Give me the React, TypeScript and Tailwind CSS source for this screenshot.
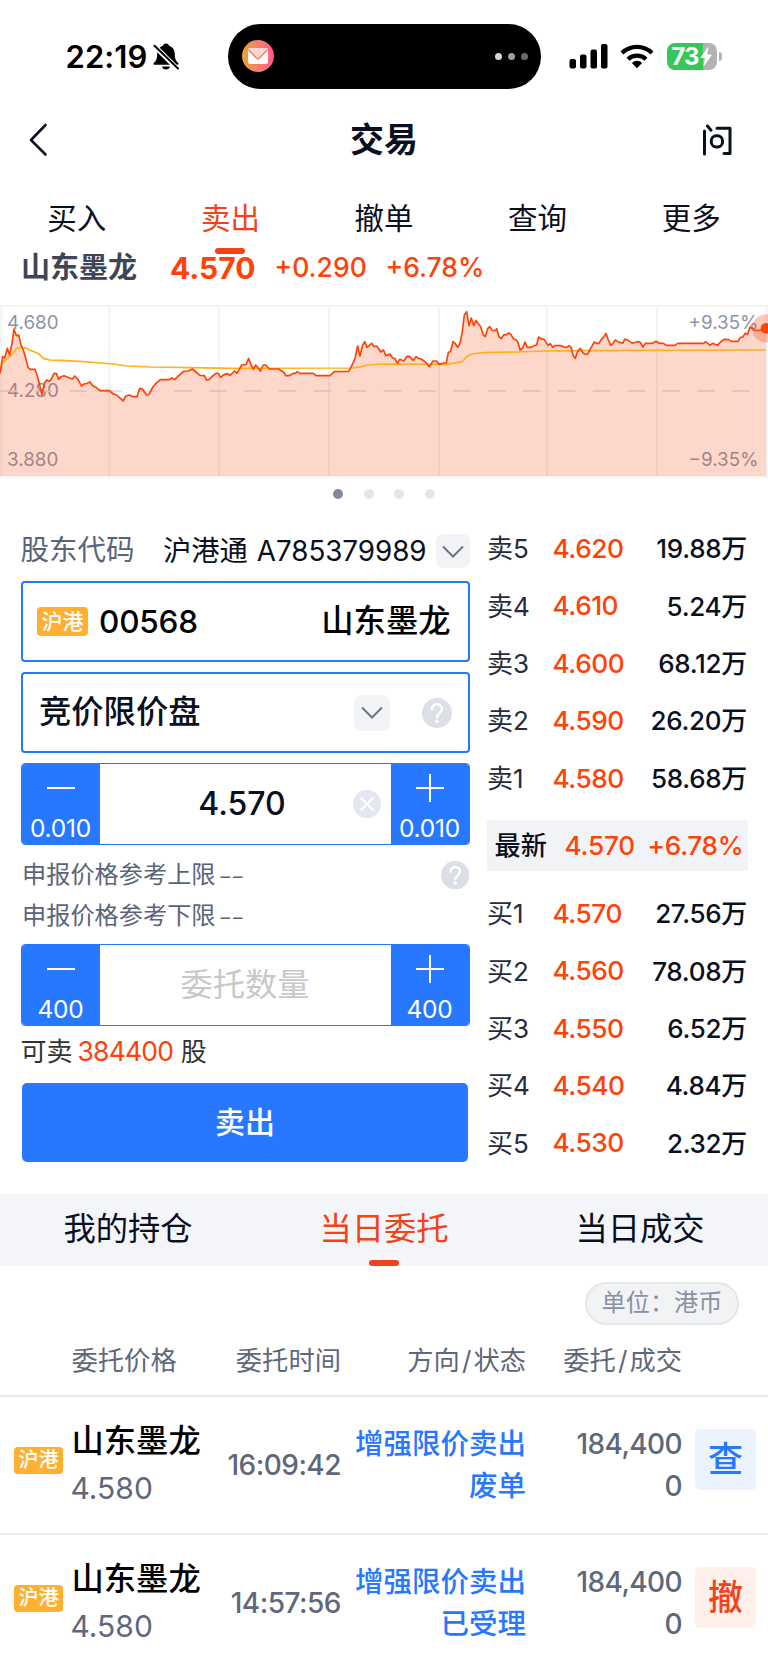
import { useState } from 'react';
import type { ReactNode } from 'react';
import clsx from 'clsx';

type Level = { label: string; price: string; volume: string };
type Order = { price: string; time: string; status: string; amount: string; filled: string; action: string };

const TOP_TABS = ['买入', '卖出', '撤单', '查询', '更多'];
const BOTTOM_TABS = ['我的持仓', '当日委托', '当日成交'];

const ASKS: Level[] = [
    { label: '卖5', price: '4.620', volume: '19.88万' },
    { label: '卖4', price: '4.610', volume: '5.24万' },
    { label: '卖3', price: '4.600', volume: '68.12万' },
    { label: '卖2', price: '4.590', volume: '26.20万' },
    { label: '卖1', price: '4.580', volume: '58.68万' },
];

const BIDS: Level[] = [
    { label: '买1', price: '4.570', volume: '27.56万' },
    { label: '买2', price: '4.560', volume: '78.08万' },
    { label: '买3', price: '4.550', volume: '6.52万' },
    { label: '买4', price: '4.540', volume: '4.84万' },
    { label: '买5', price: '4.530', volume: '2.32万' },
];

const ORDERS: Order[] = [
    { price: '4.580', time: '16:09:42', status: '废单', amount: '184,400', filled: '0', action: '查' },
    { price: '4.580', time: '14:57:56', status: '已受理', amount: '184,400', filled: '0', action: '撤' },
];

// Intraday price line, one list per half of the session
const MORNING = '0,580 8,530 14,534 22,505 29,525 36,490 42,447 49,467 56,465 63,495 70,510 77,535 84,562 91,568 105,568 112,588 119,615 126,644 133,610 140,600 147,604 154,598 162,580 169,580 176,598 183,590 192,587 203,592 217,597 224,588 234,598 244,618 252,612 262,610 270,606 278,617 288,622 300,632 328,632 340,642 350,645 362,656 369,663 378,648 388,645 398,650 411,650 419,625 427,627 440,645 447,643 458,622 468,610 481,599 508,599 516,594 524,599 535,588 551,574 565,573 577,567 588,576 600,586 613,587 620,600 627,599 640,586 648,580 655,580 662,592 672,584 683,581 690,586 704,573 711,580 718,568 725,555 738,554 746,535 753,555 760,568 767,555 774,564 781,573 790,555 797,555 808,567 836,567 845,573 852,577 857,587 868,587 880,580 886,580 892,575 900,580 940,580 948,587 990,587 1003,575 1046,574 1055,558 1065,535 1073,498 1080,528 1088,495 1094,485 1101,502 1115,490 1122,500 1130,498 1142,516 1150,510';
const AFTERNOON = '0,513 5,527 18,522 26,534 33,536 40,550 47,538 60,543 69,529 76,529 88,541 96,530 103,535 112,537 126,548 136,560 147,543 158,543 165,553 180,549 187,549 193,517 199,515 207,485 213,490 221,502 228,490 235,455 241,405 248,395 255,437 262,414 269,437 276,421 283,432 290,440 297,463 304,470 311,446 317,440 324,451 333,452 338,446 345,470 352,476 359,465 368,464 374,459 381,464 388,476 397,480 402,487 408,510 416,504 423,486 430,502 442,502 450,497 458,495 464,471 471,476 481,479 492,496 499,491 506,502 512,497 532,497 542,502 548,502 555,497 561,502 568,528 574,535 580,516 589,505 597,519 604,523 611,522 620,505 631,486 638,490 645,490 652,478 659,471 666,460 673,480 680,496 687,490 694,480 702,485 716,490 722,478 729,479 745,490 760,485 768,486 777,501 784,490 805,490 816,484 826,490 838,490 847,496 873,496 881,490 959,490 965,485 978,496 986,490 1000,496 1010,486 1020,478 1034,479 1042,484 1062,484 1069,472 1076,471 1084,460 1091,463 1098,441 1112,451 1136,451 1146,445';
const AVERAGE = '0,580 8,548 22,536 36,524 50,505 66,502 80,505 92,512 105,516 118,523 130,535 150,540 180,541 250,545 340,552 380,558 450,561 570,563 700,565 1060,564 1085,560 1105,555 1152,552 1340,553 1357,550 1387,545 1399,530 1417,522 1452,518 1552,516 1632,513 1752,512 2298,510';
const HALF = 1152;

const shifted = AFTERNOON.split(' ').map(p => {
    const [x, y] = p.split(',').map(Number);
    return `${x + HALF},${y}`;
}).join(' ');
const PRICE = `${MORNING} ${shifted}`;

const StatusBar = () => (
    <div className="flex h-[112px] items-start">
        <div className="mt-[37px] ml-[65.5px] flex w-[161.5px] items-center">
            <span className="text-[31px] leading-10 font-semibold tracking-[0.1px] text-black">22:19</span>
            <svg className="ml-[6px]" width="26" height="28" viewBox="0 0 26 28">
                <path d="M13 0.500c1.500 0 2.700.9 3 2.200 3.700 1.100 5.800 4.300 5.800 8 0 5.300 1 6.800 3.200 9 .9 1 .4 2.100-.9 2.100H1.900c-1.300 0-1.800-1.100-.9-2.100 2.200-2.200 3.200-3.700 3.200-9 0-3.700 2.100-6.900 5.800-8C10.300 1.400 11.500.5 13 .5zM9 23.500h8c-.4 1.900-2 3-4 3s-3.600-1.100-4-3z" />
                <path d="M0 1.500L25 26.500" stroke="white" strokeWidth="4.800" />
                <path d="M1.500 2.800L25 25.500" stroke="black" strokeWidth="2" strokeLinecap="round" />
            </svg>
        </div>
        <div className="mt-[24px] ml-[0.5px] flex h-[64.5px] w-[313px] items-center justify-between rounded-full bg-black pr-[13px] pl-[14px]">
            <div className="flex size-[32px] items-center justify-center rounded-full bg-linear-to-r from-[#eaa031] to-[#ff5588]">
                <svg width="20" height="16" viewBox="0 0 20 16">
                    <rect width="20" height="16" rx="2.500" fill="white" />
                    <path d="M0.500 1.500Q1 0 3 0h14q2 0 2.500 1.500L11.500 9.800q-1.500 1.400-3 0z" fill="#ffd9d2" />
                    <path d="M0.500 1.800L8.500 10q1.500 1.400 3 0l8-8.200" fill="none" stroke="#fb7560" strokeWidth="1.300" />
                </svg>
            </div>
            <div className="flex gap-[6px]">
                <span className="size-[7px] rounded-full bg-[#d6d6d6]" />
                <span className="size-[7px] rounded-full bg-[#a0a0a0]" />
                <span className="size-[7px] rounded-full bg-[#6b6b6b]" />
            </div>
        </div>
        <svg className="mt-[44px] ml-[28px]" width="39" height="25" viewBox="0 0 39 25">
            <rect x="0.500" y="15" width="6.500" height="9.500" rx="2" />
            <rect x="11" y="10.500" width="6.500" height="14" rx="2" />
            <rect x="21.500" y="5.500" width="6.500" height="19" rx="2" />
            <rect x="32" y="0" width="6.500" height="24.500" rx="2" />
        </svg>
        <svg className="mt-[43px] ml-[12px]" width="34" height="26" viewBox="0 0 34 26" fill="none" stroke="black" strokeWidth="4.200">
            <path d="M2 10a21.500 21.500 0 0 1 30 0" />
            <path d="M8 16.300a13 13 0 0 1 18 0" />
            <path d="M17 25.200l-5.100-5.300a7.400 7.400 0 0 1 10.200 0z" fill="black" stroke="none" />
        </svg>
        <div className="mt-[43px] ml-[13px] flex items-center">
            <div className="flex h-[27px] w-[50px] items-center justify-center rounded-[8px] bg-[linear-gradient(90deg,#34c759_73%,#b3b3b3_73%)] text-white">
                <span className="text-[24px] leading-[27px] font-bold tracking-[-0.8px]">73</span>
                <svg className="ml-[1px]" width="12" height="19" viewBox="0 0 12 19">
                    <path d="M7.800 0.300L0.600 10.200q-.4.800.4.800h4L3.600 18.200q0 .8.700.2L11.500 8.500q.4-.9-.5-.9H7.200L8.500.8q0-.8-.7-.5z" fill="white" />
                </svg>
            </div>
            <span className="ml-[2px] h-[9px] w-[3px] rounded-r-full bg-[#b3b3b3]" />
        </div>
    </div>
);

const Header = () => (
    <div className="flex h-[56px] items-center justify-between pr-[36px] pl-[29px]">
        <svg className="w-[30px]" height="34" viewBox="0 0 30 34" fill="none" stroke="#0b1020" strokeWidth="2.600" strokeLinecap="round" strokeLinejoin="round">
            <path d="M16.500 2L2 17l14.500 14.500" />
        </svg>
        <h1 className="ml-[7px] text-[34px] leading-[54px] font-bold text-[#0b1020]">交易</h1>
        <svg width="30" height="32" viewBox="0 0 30 32" fill="none" stroke="#0b1020" strokeWidth="3" strokeLinecap="round" strokeLinejoin="round">
            <path d="M2.500 7v23M5.500 2l3.500 4.200M15 4.200h13v25.300h-6" />
            <rect x="9.300" y="11.800" width="11.200" height="11.200" rx="5" />
        </svg>
    </div>
);

const Chart = () => (
    <div className="relative h-[180px] w-full text-[18.800px] leading-6 text-[#8d93a8]">
        <span className="absolute top-[10.500px] left-[7px]">4.680</span>
        <span className="absolute top-[79px] left-[7px]">4.280</span>
        <span className="absolute top-[148px] left-[7px]">3.880</span>
        <span className="absolute top-[10.500px] right-[9.500px]">+9.35%</span>
        <span className="absolute top-[148px] right-[9.500px]">−9.35%</span>
        <svg className="absolute inset-0" width="768" height="180" viewBox="0 360 2304 540">
            <path d="M0 378H2304M0 890H2304M4 378V890M328 378V890M657 378V890M987 378V890M1317 378V890M1641 378V890M1971 378V890M2300 378V890" stroke="#f3f3f4" strokeWidth="6" />
            <path d="M0 633H2298" stroke="#d9dbe3" strokeWidth="4" strokeDasharray="52.500 52.100" />
            <polygon points={`${PRICE} 2298,888 0,888`} fill="#fb4a14" fillOpacity="0.220" />
            <polyline points={AVERAGE} fill="none" stroke="#ffb020" strokeWidth="5" strokeLinejoin="round" />
            <polyline points={PRICE} fill="none" stroke="#ff4208" strokeWidth="5" strokeLinejoin="round" />
            <circle cx="2298" cy="445" r="42" fill="#fb4a14" fillOpacity="0.300" />
            <circle cx="2298" cy="445" r="16" fill="#ff4208" />
        </svg>
    </div>
);

const Dropdown = ({ className }: { className: string }) => (
    <div className={clsx('flex shrink-0 items-center justify-center rounded-[8px] bg-[#f2f3f7]', className)}>
        <svg width="22" height="13" viewBox="0 0 22 13" fill="none" stroke="#6b7386" strokeWidth="2">
            <path d="M1 1.500l10 10 10-10" />
        </svg>
    </div>
);

const Help = ({ className }: { className: string }) => (
    <svg className={clsx('shrink-0', className)} viewBox="0 0 30 30" fill="none">
        <circle cx="15" cy="15" r="15" fill="#dcdfe6" />
        <path d="M10 11.300c0-3 2-5 5-5s5 2 5 4.700c0 3.900-5 4.200-5 8.200" stroke="white" strokeWidth="2.400" strokeLinecap="round" />
        <circle cx="15" cy="23.300" r="1.800" fill="white" />
    </svg>
);

const Badge = ({ className }: { className: string }) => (
    <span className={clsx('flex shrink-0 items-center justify-center rounded-[4px] bg-[#ffb033] font-medium text-white', className)}>沪港</span>
);

const Stepper = ({ step, children }: { step: string; children: ReactNode }) => (
    <div className="flex h-[81.5px] overflow-hidden rounded-[4px] border border-[#2878ff] bg-white">
        <button className="flex w-[78px] shrink-0 flex-col items-center bg-[#2878ff] pt-[9px] text-white">
            <svg width="28" height="30" viewBox="0 0 28 30" stroke="white" strokeWidth="2"><path d="M0 15H28" /></svg>
            <span className="mt-[10px] text-[24.500px] leading-[30px] tracking-[-0.2px]">{step}</span>
        </button>
        <div className="relative flex flex-1 items-center justify-center">{children}</div>
        <button className="flex w-[78px] shrink-0 flex-col items-center bg-[#2878ff] pt-[9px] text-white">
            <svg width="28" height="30" viewBox="0 0 28 30" stroke="white" strokeWidth="2"><path d="M0 15H28M14 1V29" /></svg>
            <span className="mt-[10px] text-[24.500px] leading-[30px] tracking-[-0.2px]">{step}</span>
        </button>
    </div>
);

const TradeForm = () => (
    <div className="ml-[20.5px] w-[449px]">
        <div className="flex h-[34px] items-center text-[28px]">
            <span className="-mt-[2px] text-[28.500px] text-[#5a6478]">股东代码</span>
            <span className="mt-[1px] ml-auto text-[28.300px] text-[#0b1020]">沪港通</span>
            <span className="mt-[1px] mr-[9px] ml-[9px] text-[27.800px] tracking-[-0.050px] text-[#0b1020]">A785379989</span>
            <Dropdown className="size-[34px]" />
        </div>

        <div className="mt-[13px] flex h-[81px] items-center rounded-[4px] border-2 border-[#2878ff] pr-[17px] pl-[14.5px] text-black">
            <Badge className="h-[29px] w-[51px] text-[21px] leading-[29px]" />
            <span className="ml-[11px] text-[31.500px] font-medium tracking-[-0.2px]">00568</span>
            <span className="ml-auto text-[32.300px] font-medium">山东墨龙</span>
        </div>

        <div className="mt-[10px] flex h-[81px] items-center rounded-[4px] border-2 border-[#2878ff] pr-[15.5px] pl-[16.5px]">
            <span className="text-[32.300px] font-medium text-[#0b1020]">竞价限价盘</span>
            <Dropdown className="ml-auto size-[36px]" />
            <Help className="ml-[32px] size-[30px]" />
        </div>

        <div className="mt-[10px]">
            <Stepper step="0.010">
                <span className="-ml-[6px] text-[32px] font-medium text-[#0b1020]">4.570</span>
                <svg className="absolute right-[10px]" width="28" height="28" viewBox="0 0 28 28">
                    <circle cx="14" cy="14" r="14" fill="#e4e7f2" />
                    <path d="M7.500 7.500l13 13M20.500 7.500l-13 13" stroke="white" strokeWidth="1.800" />
                </svg>
            </Stepper>
        </div>

        <div className="mt-[10px] ml-[1.500px] flex h-[41px] items-center justify-between text-[24.200px] text-[#5a6478]">
            <span>申报价格参考上限<span className="ml-[5px] text-[19px] tracking-[3px]">––</span></span>
            <Help className="mr-[0.5px] size-[28.500px]" />
        </div>
        <div className="ml-[1.500px] flex h-[41px] items-center text-[24.200px] text-[#5a6478]">
            <span>申报价格参考下限<span className="ml-[5px] text-[19px] tracking-[3px]">––</span></span>
        </div>

        <div className="mt-[7.500px]">
            <Stepper step="400">
                <span className="text-[32.300px] text-[#c8c8c8]">委托数量</span>
            </Stepper>
        </div>

        <div className="flex h-[52px] items-center text-[26px] text-[#333333]">
            可卖
            <span className="mr-[6px] ml-[5px] text-[26.500px] tracking-[-0.8px] text-[#ff4208]">384400</span>
            <span className="ml-[1.500px]">股</span>
        </div>

        <button className="mt-[5.500px] ml-[1.500px] h-[79px] w-[446px] rounded-[5px] bg-[#2878ff] text-[30px] font-medium text-white">卖出</button>
    </div>
);

const LevelRow = ({ label, price, volume }: Level) => (
    <div className="flex h-[57.400px] items-center text-[26px]">
        <span className="w-[65.500px] text-[#262c3c]">{label}</span>
        <span className="text-[26.300px] font-medium tracking-[-0.5px] text-[#ff4208]">{price}</span>
        <span className="ml-auto font-medium tracking-[-0.3px] text-[#0b1020]">{volume}</span>
    </div>
);

const OrderBook = () => (
    <div className="-mt-[14px] ml-[17px] w-[261px]">
        <div className="pr-[0.500px] pl-[0.500px]">
            {ASKS.map(level => <LevelRow key={level.label} {...level} />)}
        </div>
        <div className="mt-[13px] flex h-[51px] items-center bg-[#f2f3f7] pr-[4px] pl-[8px] text-[26.200px] font-medium text-[#ff4208]">
            <span className="text-[#0b1020]">最新</span>
            <span className="ml-[17.500px] tracking-[-0.200px]">4.570</span>
            <span className="ml-auto tracking-[-0.300px]">+6.78%</span>
        </div>
        <div className="mt-[14px] pr-[0.500px] pl-[0.500px]">
            {BIDS.map(level => <LevelRow key={level.label} {...level} />)}
        </div>
    </div>
);

const OrderRow = ({ price, time, status, amount, filled, action }: Order) => (
    <div className="flex h-[138.400px] border-t-2 border-[#e8eaf1] font-medium text-[#5f677b]">
        <Badge className="mt-[50.500px] ml-[14px] h-[27px] w-[49px] text-[20px] leading-[27px]" />
        <div className="mt-[20px] ml-[8.500px] w-[129.500px]">
            <div className="text-[32.300px] leading-[48px] text-black">山东墨龙</div>
            <div className="-ml-[1px] text-[30px] leading-[47px] font-normal">{price}</div>
        </div>
        <div className="mt-[47px] w-[140px] text-right text-[28px] leading-[42px] tracking-[-0.5px]">{time}</div>
        <div className="mt-[26px] w-[185px] text-right text-[28.500px] leading-[42px] text-[#2878ff]">
            <div>增强限价卖出</div>
            <div>{status}</div>
        </div>
        <div className="mt-[26px] w-[156px] text-right text-[28px] leading-[42px] tracking-[-0.6px]">
            <div>{amount}</div>
            <div>{filled}</div>
        </div>
        <button
            className={clsx(
                'mt-[32.500px] ml-[13px] size-[61px] rounded-[5px] text-[35px] leading-[61px] font-medium',
                action === '查' ? 'bg-[#ebf3ff] text-[#2878ff]' : 'bg-[#ffefeb] text-[#f1421a]'
            )}
        >
            {action}
        </button>
    </div>
);

const App = () => {
    const [topTab, setTopTab] = useState('卖出');
    const [bottomTab, setBottomTab] = useState('当日委托');

    return (
        <div className="h-[1669px] w-[768px] overflow-hidden bg-white font-['Inter','Noto_Sans_CJK_SC',sans-serif] whitespace-nowrap">
            <StatusBar />
            <Header />

            {/* Trade tabs */}
            <div className="grid h-[76px] grid-cols-5">
                {TOP_TABS.map(tab => (
                    <button
                        key={tab}
                        onClick={() => setTopTab(tab)}
                        className={clsx('relative pt-[24px] text-[29.500px]', tab === topTab ? 'text-[#f1421a]' : 'text-[#0b1020]')}
                    >
                        {tab}
                        {tab === topTab && <span className="absolute top-[80px] left-[61.500px] h-[6px] w-[30px] rounded-full bg-[#f1421a]" />}
                    </button>
                ))}
            </div>

            {/* Quote */}
            <div className="flex h-[56px] items-center pb-[8px] pl-[21px] text-[26.500px] font-medium text-[#ff4208]">
                <span className="w-[149px] text-[29px] font-bold text-[#3d4556]">山东墨龙</span>
                <span className="w-[104.500px] text-[30px] font-bold">4.570</span>
                <span className="w-[111px]">+0.290</span>
                <span>+6.78%</span>
            </div>
            <Chart />
            <div className="flex h-[54px] justify-center gap-[20.500px] pt-[8.500px]">
                <span className="size-[10px] rounded-full bg-[#828aa3]" />
                <span className="size-[10px] rounded-full bg-[#e3e6ed]" />
                <span className="size-[10px] rounded-full bg-[#e3e6ed]" />
                <span className="size-[10px] rounded-full bg-[#e3e6ed]" />
            </div>

            <div className="flex h-[660px]">
                <TradeForm />
                <OrderBook />
            </div>

            {/* Holdings / orders / deals */}
            <div className="grid h-[72px] grid-cols-3 bg-[#f4f5f9]">
                {BOTTOM_TABS.map(tab => (
                    <button
                        key={tab}
                        onClick={() => setBottomTab(tab)}
                        className={clsx('relative pb-[2px] text-[32.300px]', tab === bottomTab ? 'text-[#f1421a]' : 'text-[#0b1020]')}
                    >
                        {tab}
                        {tab === bottomTab && <span className="absolute bottom-0 left-[113px] h-[6.500px] w-[30px] rounded-[3px] bg-[#f1421a]" />}
                    </button>
                ))}
            </div>
            <div className="flex h-[60.500px] justify-end pt-[16px] pr-[29px]">
                <span className="flex h-[43px] w-[154px] items-center justify-center rounded-full border-2 border-[#e5e7ea] bg-[#f2f3f5] text-[24.200px] text-[#8a91a5]">单位：港币</span>
            </div>
            <div className="flex h-[68px] items-center text-[26.300px] text-[#5f677b]">
                <span className="ml-[71.500px] w-[129.500px]">委托价格</span>
                <span className="w-[140px] text-right">委托时间</span>
                <span className="w-[185px] text-right">方向<span className="mx-[2px]">/</span>状态</span>
                <span className="w-[156px] text-right">委托<span className="mx-[2px]">/</span>成交</span>
            </div>
            {ORDERS.map(order => <OrderRow key={order.time} {...order} />)}
        </div>
    );
};

export default App;
